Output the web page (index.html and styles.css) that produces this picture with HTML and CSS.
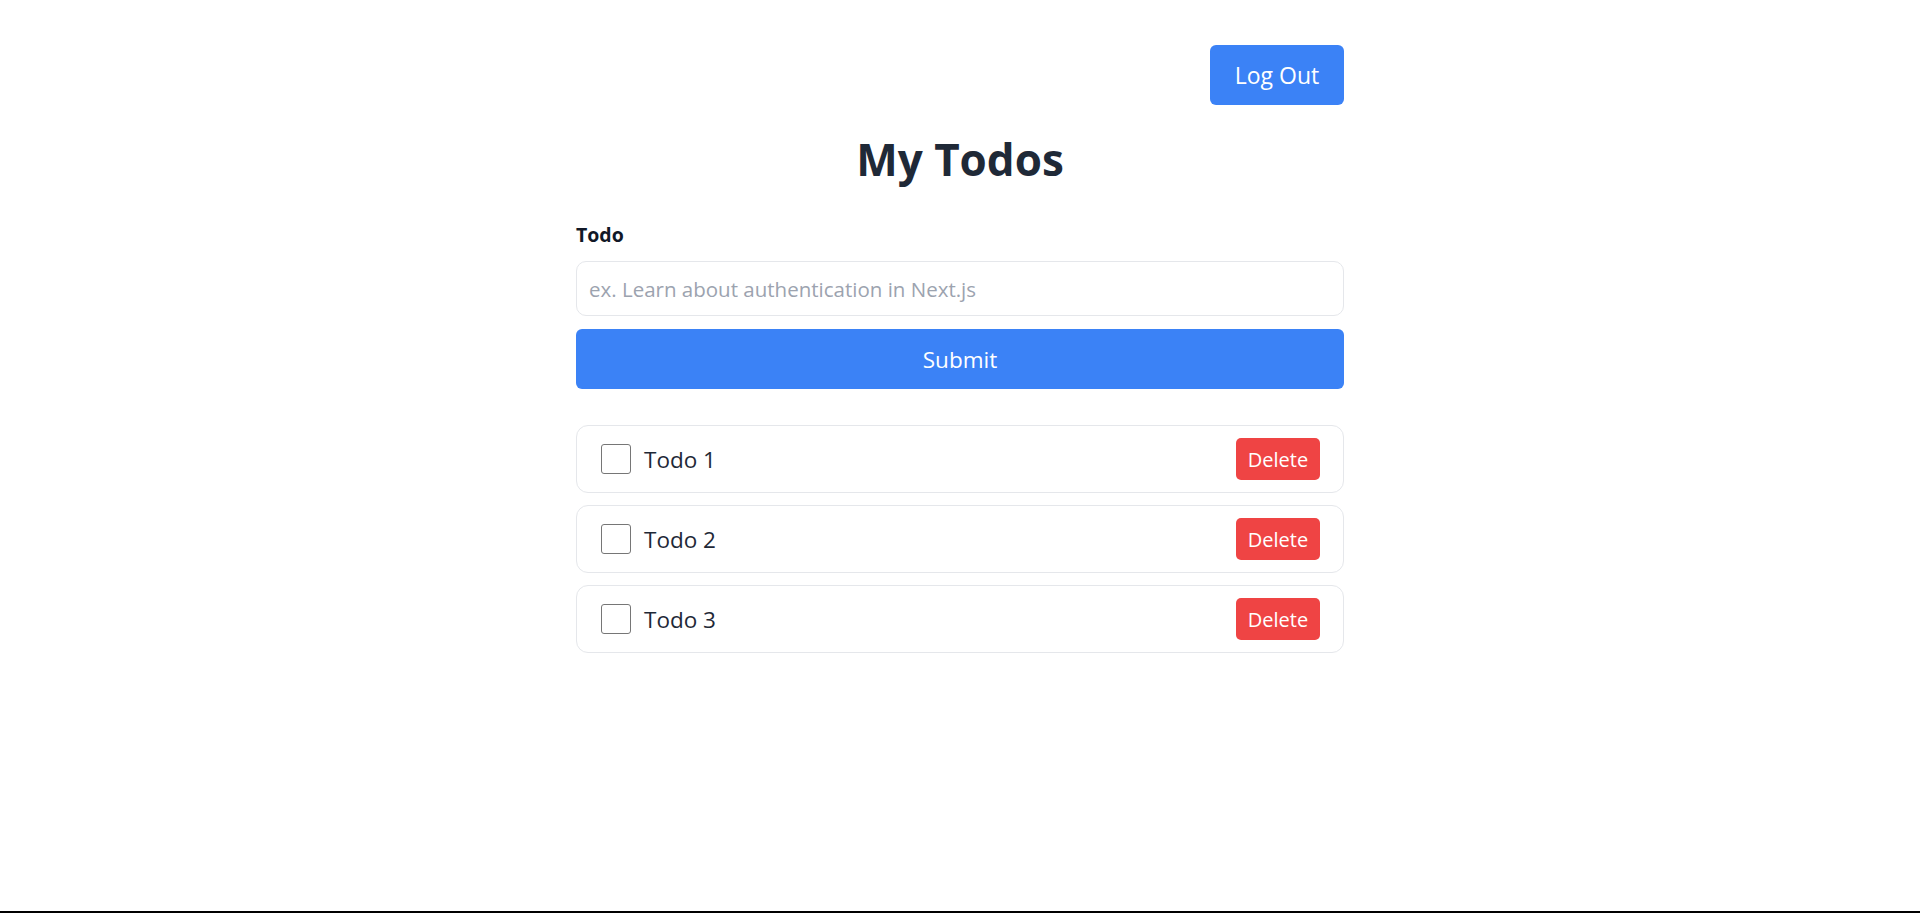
FILE: index.html
```html
<!DOCTYPE html>
<html lang="en">
<head>
<meta charset="utf-8">
<title>My Todos</title>
<link rel="stylesheet" href="styles.css">
</head>
<body>
<main class="page">
  <div class="topbar">
    <button class="btn btn-blue logout">Log Out</button>
  </div>
  <h1 class="title">My Todos</h1>
  <form class="form">
    <label class="label" for="todo">Todo</label>
    <input id="todo" class="input" type="text" placeholder="ex. Learn about authentication in Next.js">
    <button type="button" class="btn btn-blue submit">Submit</button>
  </form>
  <ul class="list">
    <li class="item">
      <label class="item-left"><span class="check"></span><span class="item-text">Todo 1</span></label>
      <button class="btn btn-red">Delete</button>
    </li>
    <li class="item">
      <label class="item-left"><span class="check"></span><span class="item-text">Todo 2</span></label>
      <button class="btn btn-red">Delete</button>
    </li>
    <li class="item">
      <label class="item-left"><span class="check"></span><span class="item-text">Todo 3</span></label>
      <button class="btn btn-red">Delete</button>
    </li>
  </ul>
</main>
</body>
</html>
```
FILE: styles.css
```css
html {
  background: #000;
}
body {
  margin: 0;
  background: #fff;
  min-height: calc(100vh - 2px);
  font-family: "Open Sans", "Noto Sans", sans-serif;
  color: #1f2937;
}
.page {
  width: 768px;
  margin: 0 auto;
  padding-top: 45px;
}
.topbar {
  display: flex;
  justify-content: flex-end;
}
.btn {
  border: none;
  color: #fff;
  font-family: inherit;
  cursor: pointer;
}
.btn-blue {
  background: #3b82f6;
}
.logout {
  width: 134px;
  height: 60px;
  border-radius: 6px;
  font-size: 23px;
}
.title {
  margin: 26px 0 0;
  text-align: center;
  font-size: 44px;
  line-height: 56px;
  font-weight: 700;
  color: #1f2937;
}
.form {
  display: flex;
  flex-direction: column;
  margin-top: 36px;
}
.label {
  font-size: 19.5px;
  font-weight: 700;
  color: #111827;
  line-height: 24px;
}
.input {
  margin-top: 14px;
  height: 55px;
  box-sizing: border-box;
  border: 1px solid #e5e7eb;
  border-radius: 10px;
  padding: 0 12px;
  font-family: inherit;
  font-size: 20.5px;
  outline: none;
}
.input::placeholder {
  color: #9ca3af;
}
.submit {
  margin-top: 13px;
  height: 60px;
  border-radius: 6px;
  font-size: 22.5px;
}
.list {
  list-style: none;
  margin: 36px 0 0;
  padding: 0;
  display: flex;
  flex-direction: column;
  gap: 12px;
}
.item {
  height: 68px;
  box-sizing: border-box;
  border: 1px solid #e5e7eb;
  border-radius: 12px;
  display: flex;
  align-items: center;
  justify-content: space-between;
  padding: 0 23px 0 24px;
}
.item-left {
  display: flex;
  align-items: center;
  gap: 13px;
}
.check {
  width: 30px;
  height: 30px;
  border: 1.5px solid #767676;
  border-radius: 3px;
  box-sizing: border-box;
}
.item-text {
  font-size: 22.5px;
  color: #1f2937;
}
.btn-red {
  background: #ef4444;
  width: 84px;
  height: 42px;
  border-radius: 5px;
  font-size: 20px;
}
```
